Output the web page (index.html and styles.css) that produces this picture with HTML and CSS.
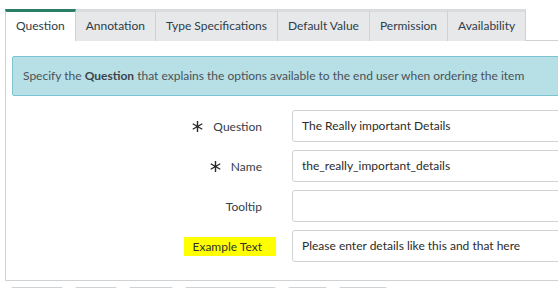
FILE: index.html
```html
<!doctype html>
<html lang="en">
	<head>
		<meta charset="UTF-8" />
		<meta name="viewport" content="width=device-width, initial-scale=1.0" />
		<title>Catalog Variable</title>
		<link rel="stylesheet" href="styles.css">
	</head>
	<body>
		<div class="page">
			<div class="tabs">
				<div class="tab active">Question</div>
				<div class="tab">Annotation</div>
				<div class="tab">Type Specifications</div>
				<div class="tab">Default Value</div>
				<div class="tab">Permission</div>
				<div class="tab">Availability</div>
			</div>

			<div class="panel">
				<div class="info">Specify the <strong>Question</strong> that explains the options available to the end user when ordering the item</div>

				<div class="form">
					<div class="row">
						<label class="label"><svg class="req" width="11" height="11" viewBox="0 0 11 11"><path d="M5.5 0V11M0.74 2.75L10.26 8.25M0.74 8.25L10.26 2.75" /></svg>Question</label>
						<div class="field">The Really important Details</div>
					</div>
					<div class="row">
						<label class="label"><svg class="req" width="11" height="11" viewBox="0 0 11 11"><path d="M5.5 0V11M0.74 2.75L10.26 8.25M0.74 8.25L10.26 2.75" /></svg>Name</label>
						<div class="field">the_really_important_details</div>
					</div>
					<div class="row">
						<label class="label">Tooltip</label>
						<div class="field"></div>
					</div>
					<div class="row">
						<label class="label"><span class="marker">Example Text</span></label>
						<div class="field">Please enter details like this and that here</div>
					</div>
				</div>
			</div>

			<div class="buttons">
				<div class="btn w1"></div>
				<div class="btn w2"></div>
				<div class="btn w3"></div>
				<div class="btn w4"></div>
				<div class="btn w5"></div>
				<div class="btn w6"></div>
			</div>
		</div>
	</body>
</html>
```

FILE: styles.css
```css
html, body { margin: 0; padding: 0; background: #fff; overflow: hidden; }
body { font-family: Lato, "Liberation Sans", sans-serif; font-size: 12px; color: #2e3d49; }
.page { padding: 9px 0 0 5px; width: 620px; }

/* tabs */
.tabs { display: flex; border-bottom: 1px solid #cfd2d4; height: 31px; }
.tab { box-sizing: border-box; height: 32px; padding: 0 10px; line-height: 28px; background: #e6e8ea; border-top: 3px solid #d9dcde; border-right: 1px solid #cfd2d4; white-space: nowrap; }
.tab.active { background: #fff; border-top-color: #2b7f68; border-left: 1px solid #cfd2d4; border-right: 1px solid #cfd2d4; }

/* panel */
.panel { border-left: 1px solid #cfd2d4; border-bottom: 1px solid #cfd2d4; padding: 15px 0 18px 6px; }
.info { background: #b7dfe6; border: 1px solid #7cc3d1; border-radius: 2px; padding: 0 10px; height: 38px; line-height: 38px; color: #4a5257; white-space: nowrap; }
.info strong { font-weight: bold; color: #3d4449; }

.form { margin-top: 14px; display: flex; flex-direction: column; gap: 8px; }
.row { display: flex; align-items: center; }
.label { width: 280px; flex: none; box-sizing: border-box; text-align: right; padding-right: 30px; color: #34404a; }
.req { display: inline-block; margin-right: 10px; vertical-align: -1px; stroke: #2a2a2a; stroke-width: 1.4; }
.marker { background: #ffff00; padding: 2px 14px 2px 8px; margin-right: -14px; color: #333; }
.field { flex: 1; height: 32px; box-sizing: border-box; border: 1px solid #cfd3d6; border-radius: 3px; padding: 0 9px; line-height: 30px; color: #2b2b2b; white-space: nowrap; }

.buttons { display: flex; gap: 10px; margin-top: 6px; padding-left: 5px; }
.btn { height: 12px; border: 1px solid #cfd2d4; border-radius: 3px; }
.w1 { width: 52px; }
.w2 { width: 42px; }
.w3 { width: 44px; }
.w4 { width: 91px; }
.w5 { width: 39px; }
.w6 { width: 48px; }
```
